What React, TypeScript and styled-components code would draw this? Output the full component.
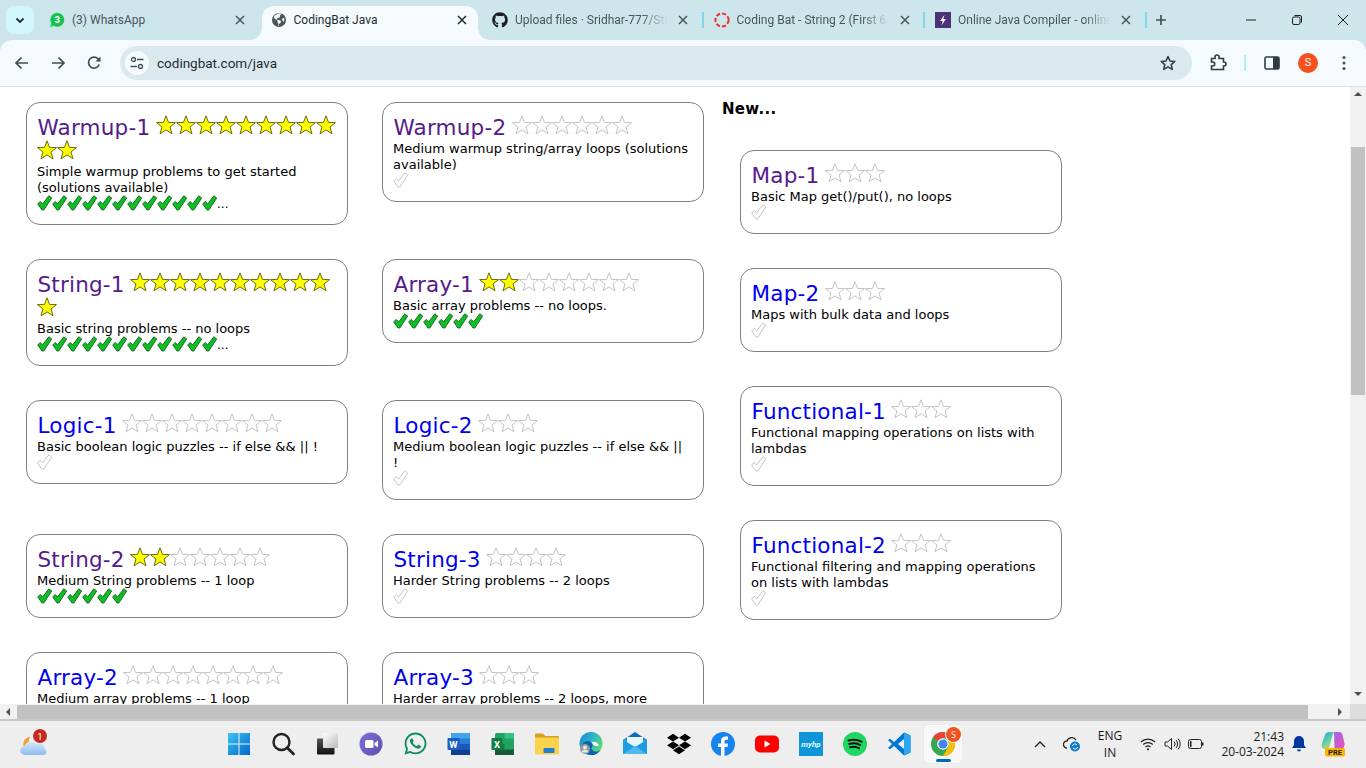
import React from "react";
import styled, { createGlobalStyle } from "styled-components";
import { FaWhatsapp, FaDropbox, FaGithub } from "react-icons/fa";

const Global = createGlobalStyle`
  html, body { margin: 0; padding: 0; height: 100%; overflow: hidden; background: #fff; }
  #root { height: 100%; }
  * { box-sizing: border-box; }
`;

const Screen = styled.div`
  width: 1366px; height: 768px; display: flex; flex-direction: column; overflow: hidden;
  font-family: Roboto, "Noto Sans", sans-serif;
`;

/* ---------- browser chrome ---------- */
const TabStrip = styled.div`
  height: 40px; flex: none; background: #cde6eb; display: flex; align-items: flex-start; padding-left: 6px;
`;
const TabListButton = styled.div`
  width: 28px; height: 28px; margin-top: 6px; margin-right: 6.5px; border-radius: 8px; background: #d3f5fc;
  display: flex; align-items: center; justify-content: center; flex: none;
`;
const Tab = styled.div<{ $active?: boolean; $sep?: boolean }>`
  position: relative; flex: none; height: 34px; margin-top: 6px; display: flex; align-items: center;
  padding-left: 8.5px; padding-bottom: 6px; width: ${p => (p.$active ? "216px" : "221.5px")};
  margin-right: ${p => (p.$active ? "5.5px" : "0")};
  padding-right: ${p => (p.$active ? "10.5px" : "16px")};
  background: ${p => (p.$active ? "#f5fafd" : "transparent")};
  border-radius: 12px 12px 0 0;
  ${p => p.$sep && `&::after { content: ""; position: absolute; left: 218px; top: 6px; width: 2px; height: 16px; background: #7fd6e6; }`}
  ${p => p.$active && `
    &::before { content: ""; position: absolute; left: -12px; bottom: 0; width: 12px; height: 12px;
      background: radial-gradient(circle at 0 0, transparent 11.5px, #f5fafd 12px); }
    &::after { content: ""; position: absolute; right: -12px; bottom: 0; width: 12px; height: 12px;
      background: radial-gradient(circle at 100% 0, transparent 11.5px, #f5fafd 12px); }
  `}
`;
const TabIcon = styled.span`
  width: 16px; height: 16px; flex: none; display: flex; align-items: center; justify-content: center; margin-right: 7px;
`;
const TabTitle = styled.span<{ $fade?: boolean; $active?: boolean }>`
  width: 152.5px; flex: none; overflow: hidden; white-space: nowrap; font-size: 12px; line-height: 16px;
  color: ${p => (p.$active ? "#1f2d32" : "#47565b")};
  ${p => p.$fade && `-webkit-mask-image: linear-gradient(to right, #000 82%, transparent 100%); mask-image: linear-gradient(to right, #000 82%, transparent 100%);`}
`;
const TabClose = styled.span`
  margin-left: auto; width: 12px; height: 12px; flex: none; display: flex;
`;
const NewTab = styled.div`
  width: 26px; height: 28px; margin-top: 6px; flex: none; display: flex; align-items: center; justify-content: center;
`;
const WindowControls = styled.div`
  margin-left: auto; display: flex; height: 40px;
`;
const WindowButton = styled.div`
  width: 46px; height: 40px; display: flex; align-items: center; justify-content: center;
`;
const Toolbar = styled.div`
  height: 47px; flex: none; background: #f5fafd; border-bottom: 1px solid #d6e4e9; display: flex; align-items: center;
  padding-left: 4px; padding-bottom: 1px; border-radius: 12px 12px 0 0; position: relative;
`;
const ToolbarBackdrop = styled.div`
  flex: none; background: #cde6eb;
`;
const ToolButton = styled.div`
  width: 36px; height: 36px; flex: none; display: flex; align-items: center; justify-content: center;
`;
const Omnibox = styled.div`
  width: 1072px; height: 34px; flex: none; margin: 0 8px; border-radius: 17px; background: #dae9ee;
  display: flex; align-items: center; padding: 0 16px 0 5px;
`;
const SiteBadge = styled.div`
  width: 24px; height: 24px; border-radius: 50%; background: #f5fafd; display: flex; align-items: center; justify-content: center; margin-right: 8px;
`;
const Url = styled.span`
  font-size: 13.5px; color: #1f2d32; flex: 1;
`;
const ToolSep = styled.div`
  width: 2px; height: 16px; margin: 0 8px; background: #aef0fb; flex: none;
`;
const Avatar = styled.div`
  width: 20px; height: 20px; border-radius: 50%; background: #f4511e; color: #fff; font-size: 11px;
  display: flex; align-items: center; justify-content: center;
`;

/* ---------- web page ---------- */
const Viewport = styled.div`
  flex: none; height: 617px; display: flex; overflow: hidden; background: #fff;
`;
const Page = styled.main`
  flex: 1; min-width: 0; overflow: hidden; padding: 15px 0 0 26px; display: flex; align-items: flex-start;
  font-family: "DejaVu Sans", Verdana, sans-serif; color: #000;
`;
const MainGrid = styled.div`
  display: grid; grid-template-columns: 322px 322px; gap: 34px; align-items: start; flex: none;
`;
const NewColumn = styled.section`
  margin-left: 18px; flex: none; display: flex; flex-direction: column;
`;
const NewHeading = styled.h2`
  margin: 0 0 34px; font-size: 15px; line-height: 14px; font-weight: 700; letter-spacing: 0.3px;
`;
const NewList = styled.div`
  margin-left: 18px; width: 322px; display: flex; flex-direction: column; gap: 34px;
`;
const Card = styled.article`
  border: 1px solid #808080; border-radius: 14px; padding: 12px 10px 13px; background: #fff;
`;
const Heading = styled.div<{ $wrapped?: boolean }>`
  line-height: 25px; font-size: 21.5px; letter-spacing: 0.2px;
  margin-bottom: ${p => (p.$wrapped ? "-2px" : "0")};
`;
const CardLink = styled.a<{ $visited?: boolean }>`
  color: ${p => (p.$visited ? "#551a8b" : "#0000ee")}; text-decoration: none; margin: 0 5.3px 0 0.5px;
`;
const StarSvg = styled.svg`
  width: 20px; height: 20px; vertical-align: top;
`;
const Desc = styled.div`
  font-size: 13px; line-height: 16px; white-space: pre-line; padding-top: 1px; margin-bottom: -1px;
`;
const Checks = styled.div`
  height: 16px; line-height: 16px; font-size: 13px; white-space: nowrap; display: flex; align-items: center;
`;
const CheckSvg = styled.svg`
  width: 15px; height: 16px; flex: none;
`;
const More = styled.span`
  position: relative; top: 1px; font-size: 12px;
`;

const VScroll = styled.div`
  width: 16px; flex: none; background: #f1f1f1; display: flex; flex-direction: column; align-items: center; padding-bottom: 2px;
`;
const VThumb = styled.div`
  width: 14px; height: 248px; margin: 44px 0 auto; background: #c1c1c1; flex: none;
`;
const ArrowBox = styled.div<{ $gap?: boolean }>`
  width: 16px; height: 16px; flex: none; display: flex; align-items: center; justify-content: center;
  margin-left: ${p => (p.$gap ? "24px" : "0")};
`;
const HScroll = styled.div`
  height: 17px; flex: none; background: #f1f1f1; display: flex; align-items: flex-start; border-bottom: 2px solid #c8c8c8;
`;
const HThumb = styled.div`
  width: 1291px; height: 14px; margin: 1px 0 0 1px; background: #c1c1c1; flex: none;
`;
const HCorner = styled.div`
  width: 16px; height: 15px; background: #dcdcdc; margin-left: auto; flex: none;
`;

/* ---------- taskbar ---------- */
const Taskbar = styled.footer`
  flex: 1; background: #eeeeee; display: flex; align-items: center; padding-bottom: 2px; font-family: "Open Sans", "Noto Sans", sans-serif;
`;
const Weather = styled.div`
  width: 30px; height: 30px; margin-left: 20px; flex: none;
`;
const Dock = styled.div`
  display: flex; margin-left: 167px; flex: none;
`;
const DockItem = styled.div<{ $active?: boolean }>`
  position: relative; width: 44px; height: 40px; display: flex; align-items: center; justify-content: center;
  ${p => p.$active && `&::before { content: ""; position: absolute; left: 3px; right: 3px; top: 1px; bottom: 1px; background: #f8f8f8; border-radius: 4px; box-shadow: 0 0 1px #ccc; }
   &::after { content: ""; position: absolute; left: 15px; bottom: 2px; width: 15px; height: 3px; border-radius: 2px; background: #0067c0; }`}
  & > * { position: relative; z-index: 1; }
`;
const Tray = styled.div`
  margin-left: auto; display: flex; align-items: center; height: 100%; color: #1a1a1a;
`;
const TrayIcon = styled.div<{ $w: number }>`
  width: ${p => p.$w}px; display: flex; align-items: center; justify-content: center; flex: none;
  & > svg { flex: none; }
`;
const Lang = styled.div`
  width: 36px; margin-right: 4px; font-size: 12px; line-height: 17px; text-align: center; flex: none; white-space: nowrap;
`;
const Clock = styled.div`
  width: 72px; font-size: 12px; line-height: 15px; text-align: right; flex: none; white-space: nowrap;
`;
const ChromeS = styled.span`
  position: absolute !important; right: 4px; top: 3px; width: 15px; height: 15px; border-radius: 50%; background: #f4511e; color: #fff;
  font-size: 9px; display: flex; align-items: center; justify-content: center; box-shadow: 0 0 0 1px #f8f8f8;
`;

/* ---------- drawn icons ---------- */
const Star = ({ on }: { on?: boolean }) => (
  <StarSvg viewBox="0 0 20 20">
    <polygon
      points="10,0.8 12.5,7.4 19.5,7.6 14,12 16,18.8 10,14.9 4,18.8 6,12 0.5,7.6 7.5,7.4"
      fill={on ? "#ffff00" : "#fff"}
      stroke={on ? "#6b6b10" : "#c4c4c4"}
      strokeWidth="1"
    />
  </StarSvg>
);
const Check = ({ on }: { on?: boolean }) => (
  <CheckSvg viewBox="0 0 15 16">
    <polygon
      points="0.7,9 3.2,6.4 5.6,9 11.8,0.8 14.7,3 6.8,15 5,15"
      fill={on ? "#0cc024" : "#fff"}
      stroke={on ? "#1f6b2a" : "#c4c4c4"}
      strokeWidth="1"
    />
  </CheckSvg>
);
const CloseX = ({ c = "#47565b" }: { c?: string }) => (
  <svg width="12" height="12" viewBox="0 0 12 12"><path d="M2 2l8 8M10 2l-8 8" stroke={c} strokeWidth="1.5" /></svg>
);

type CardData = { t: string; v?: boolean; on?: number; off?: number; d: string; c?: number; more?: boolean };
const left: CardData[] = [
  { t: "Warmup-1", v: true, on: 11, d: "Simple warmup problems to get started (solutions available)", c: 12, more: true },
  { t: "Warmup-2", v: true, off: 6, d: "Medium warmup string/array loops (solutions available)" },
  { t: "String-1", v: true, on: 11, d: "Basic string problems -- no loops", c: 12, more: true },
  { t: "Array-1", v: true, on: 2, off: 6, d: "Basic array problems -- no loops.", c: 6 },
  { t: "Logic-1", off: 8, d: "Basic boolean logic puzzles -- if else && || !" },
  { t: "Logic-2", off: 3, d: "Medium boolean logic puzzles -- if else && ||\n!" },
  { t: "String-2", v: true, on: 2, off: 5, d: "Medium String problems -- 1 loop", c: 6 },
  { t: "String-3", off: 4, d: "Harder String problems -- 2 loops" },
  { t: "Array-2", off: 8, d: "Medium array problems -- 1 loop" },
  { t: "Array-3", off: 3, d: "Harder array problems -- 2 loops, more" },
];
const right: CardData[] = [
  { t: "Map-1", v: true, off: 3, d: "Basic Map get()/put(), no loops" },
  { t: "Map-2", off: 3, d: "Maps with bulk data and loops" },
  { t: "Functional-1", off: 3, d: "Functional mapping operations on lists with lambdas" },
  { t: "Functional-2", off: 3, d: "Functional filtering and mapping operations on lists with lambdas" },
];

const ProblemCard = ({ data }: { data: CardData }) => (
  <Card>
    <Heading $wrapped={(data.on ?? 0) + (data.off ?? 0) > 10}>
      <CardLink href="#" $visited={data.v}>{data.t}</CardLink>
      {Array.from({ length: data.on ?? 0 }, (_, i) => <Star key={"a" + i} on />)}
      {Array.from({ length: data.off ?? 0 }, (_, i) => <Star key={"b" + i} />)}
    </Heading>
    <Desc>{data.d}</Desc>
    <Checks>
      {data.c
        ? Array.from({ length: data.c }, (_, i) => <Check key={i} on />)
        : <Check />}
      {data.more && <More>...</More>}
    </Checks>
  </Card>
);

const WhatsFav = () => (
  <svg width="16" height="16" viewBox="0 0 16 16">
    <path d="M1 15l1-4a7 7 0 1 1 3 3z" fill="#25d366" />
    <circle cx="8.3" cy="7.8" r="6.6" fill="#19c153" />
    <text x="8.3" y="11" fontSize="9.5" fontWeight="700" fill="#fff" textAnchor="middle" fontFamily="Roboto, sans-serif">3</text>
  </svg>
);
const GlobeFav = () => (
  <svg width="16" height="16" viewBox="0 0 16 16">
    <circle cx="8" cy="8" r="7" fill="#4a555a" />
    <path d="M7 1.5C5 3 3 3 3 5s2 2 3 3 0 2 1 3 0 3 1 3.5V12c1-.5 2-1.5 2-2.5S8.5 8 7 8 5.5 6.5 7 6s2-.5 2-2 1-1.5 2-2C9.5 1 8 1 7 1.5z" fill="#f5fafd" />
    <path d="M13 6c-1 0-2 .5-2 1.5s1 1 1.5 2.5c.8-1 1-3 .5-4z" fill="#f5fafd" />
  </svg>
);
const BatFav = () => (
  <svg width="16" height="16" viewBox="0 0 16 16">
    <circle cx="8" cy="8" r="6.6" fill="none" stroke="#e8322b" strokeWidth="2" strokeDasharray="4.2 2" />
  </svg>
);
const BoltFav = () => (
  <svg width="16" height="16" viewBox="0 0 16 16">
    <rect width="16" height="16" fill="#4b3279" />
    <path d="M9.5 2.8L5 9h2.7L6.5 13.2 11 7H8.3z" fill="#fff" />
  </svg>
);

const WinLogo = () => (
  <svg width="24" height="24" viewBox="0 0 24 24">
    <defs><linearGradient id="wl" x1="0" y1="0" x2="1" y2="1"><stop offset="0" stopColor="#3cc4f4" /><stop offset="1" stopColor="#0068c8" /></linearGradient></defs>
    <path d="M1 1h10.5v10.5H1zM12.5 1H23v10.5H12.5zM1 12.5h10.5V23H1zM12.5 12.5H23V23H12.5z" fill="url(#wl)" />
  </svg>
);
const SearchIcon = () => (
  <svg width="26" height="26" viewBox="0 0 26 26"><circle cx="11.5" cy="11" r="8" fill="none" stroke="#222" strokeWidth="2.4" /><path d="M17.5 17l6 6" stroke="#222" strokeWidth="2.8" strokeLinecap="round" /></svg>
);
const TaskView = () => (
  <svg width="24" height="24" viewBox="0 0 24 24">
    <defs><linearGradient id="tv" x1="0" y1="0" x2="1" y2="1"><stop offset="0" stopColor="#fff" /><stop offset="1" stopColor="#bbb" /></linearGradient>
    <linearGradient id="tv2" x1="0" y1="0" x2="0" y2="1"><stop offset="0" stopColor="#555" /><stop offset="1" stopColor="#111" /></linearGradient></defs>
    <rect x="2" y="6.5" width="17.5" height="16" rx="1" fill="url(#tv2)" />
    <rect x="8" y="1" width="15" height="15" rx="1" fill="url(#tv)" />
  </svg>
);
const MeetIcon = () => (
  <svg width="24" height="24" viewBox="0 0 24 24">
    <defs><linearGradient id="mt" x1="0" y1="0" x2="1" y2="1"><stop offset="0" stopColor="#7d6fd8" /><stop offset="1" stopColor="#5a4fb0" /></linearGradient></defs>
    <circle cx="12" cy="12" r="11.5" fill="url(#mt)" />
    <rect x="6" y="8" width="8.5" height="8" rx="1.5" fill="#fff" />
    <path d="M15.5 11l3.5-2.5v7L15.5 13z" fill="#fff" />
  </svg>
);
const WordIcon = () => (
  <svg width="24" height="24" viewBox="0 0 24 24">
    <rect x="4" y="1" width="19" height="22" rx="1.5" fill="#2b7cd3" />
    <rect x="4" y="1" width="19" height="5.5" fill="#41a5ee" />
    <rect x="4" y="12" width="19" height="5.5" fill="#185abd" />
    <rect x="4" y="17.5" width="19" height="5.5" fill="#103f91" />
    <rect x="0.5" y="6" width="12" height="12" rx="1" fill="#1a5fc0" />
    <text x="6.5" y="15.5" fontSize="9.5" fontWeight="700" fill="#fff" textAnchor="middle" fontFamily="Roboto, sans-serif">W</text>
  </svg>
);
const ExcelIcon = () => (
  <svg width="24" height="24" viewBox="0 0 24 24">
    <rect x="4" y="1" width="19" height="22" rx="1.5" fill="#21a366" />
    <rect x="13.5" y="1" width="9.5" height="5.5" fill="#33c481" />
    <rect x="4" y="12" width="9.5" height="5.5" fill="#107c41" />
    <rect x="4" y="17.5" width="19" height="5.5" fill="#185c37" />
    <rect x="0.5" y="6" width="11" height="12" rx="1" fill="#107c41" />
    <text x="6" y="15.5" fontSize="9.5" fontWeight="700" fill="#fff" textAnchor="middle" fontFamily="Roboto, sans-serif">X</text>
  </svg>
);
const FolderIcon = () => (
  <svg width="24" height="24" viewBox="0 0 24 24">
    <path d="M0 2.5a1 1 0 0 1 1-1h7l2.5 2.5H23a1 1 0 0 1 1 1V8H0z" fill="#d9a020" />
    <path d="M0 5.5h24v16a1 1 0 0 1-1 1H1a1 1 0 0 1-1-1z" fill="#fcd34d" />
    <rect x="8.5" y="16" width="11" height="5" rx="1" fill="#1f7fd0" />
  </svg>
);
const EdgeIcon = () => (
  <svg width="24" height="24" viewBox="0 0 24 24">
    <defs><linearGradient id="eg" x1="0" y1="0" x2="1" y2="0.6"><stop offset="0" stopColor="#1685d0" /><stop offset=".55" stopColor="#2fb6c8" /><stop offset="1" stopColor="#62dc6c" /></linearGradient></defs>
    <circle cx="12" cy="11.5" r="11.5" fill="url(#eg)" />
    <path d="M2 16c0-5 6-9 10-6 2 1.5 2 3.5 1 5-1.5 2 1 5 5 4.5 1.5-.2 3-1 4-2.5-2 4-6 6.5-10 6-5-.3-9-3-10-7z" fill="#0b63b0" />
    <path d="M12 10c3-1 7 0 8 3.5-2 1-4.5.5-5.5-.5-.8-1-1.5-2.5-2.5-3z" fill="#eefaff" />
    <circle cx="6" cy="17" r="5" fill="#9a9a9a" />
    <circle cx="6" cy="15.5" r="1.9" fill="#e8e8e8" />
    <path d="M2.7 20.5a3.3 2.8 0 0 1 6.6 0z" fill="#e8e8e8" />
  </svg>
);
const MailIcon = () => (
  <svg width="24" height="24" viewBox="0 0 24 24">
    <path d="M0 8L12 0l12 8z" fill="#0f6cbd" />
    <rect y="7.5" width="24" height="14.5" fill="#28a8ea" />
    <path d="M4 5h16v5l-8 5-8-5z" fill="#eaf6ff" />
    <path d="M0 8l12 8 12-8v14H0z" fill="#1b9de2" />
    <path d="M0 22l12-8 12 8z" fill="#50b8f0" />
  </svg>
);
const FacebookIcon = () => (
  <svg width="24" height="24" viewBox="0 0 24 24">
    <circle cx="12" cy="12" r="12" fill="#1684ee" />
    <path d="M13.5 24v-9h3l.5-3.5h-3.5V9.5c0-1 .5-1.8 1.9-1.8H17V4.6c-.5-.1-1.5-.2-2.6-.2-2.7 0-4.4 1.6-4.4 4.5v2.6H7V15h3v9z" fill="#fff" />
  </svg>
);
const SpotifyIcon = () => (
  <svg width="24" height="24" viewBox="0 0 24 24">
    <circle cx="12" cy="12" r="12" fill="#1ed760" />
    <path d="M5.5 8.5c4-1.2 9-1 13 1.2M6.2 12c3.5-1 8-.8 11 1M7 15.3c3-.8 6.5-.6 9 .9" fill="none" stroke="#111" strokeWidth="2" strokeLinecap="round" />
  </svg>
);
const YouTubeIcon = () => (
  <svg width="24" height="24" viewBox="0 0 24 24">
    <rect y="3.5" width="24" height="17" rx="5" fill="#f00" />
    <path d="M9.5 8.5v7l6-3.5z" fill="#fff" />
  </svg>
);
const MyHpIcon = () => (
  <svg width="24" height="24" viewBox="0 0 24 24">
    <rect width="24" height="24" fill="#0e96d8" />
    <text x="12" y="15" fontSize="8" fontStyle="italic" fontWeight="700" fill="#dff" textAnchor="middle" fontFamily="Roboto, sans-serif">myhp</text>
  </svg>
);
const VsCodeIcon = () => (
  <svg width="24" height="24" viewBox="0 0 24 24">
    <path d="M17 .5L23.5 3.5v17L17 23.5 7 14l-4 3.2-2-1.2L5 12 1 8l2-1.2L7 10z" fill="#0078d0" />
    <path d="M17 .5L23.5 3.5v17L17 23.5z" fill="#2aa6f0" />
    <path d="M17 7l-6 5 6 5z" fill="#eee" />
  </svg>
);
const ChromeIcon = () => (
  <svg width="24" height="24" viewBox="0 0 24 24" >
    <circle cx="12" cy="12" r="12" fill="#34a853" />
    <path d="M12 0a12 12 0 0 1 10.4 6H12a6 6 0 0 0-5.4 3.3L2.2 5A12 12 0 0 1 12 0z" fill="#ea4335" />
    <path d="M22.4 6A12 12 0 0 1 12 24l5.2-9A6 6 0 0 0 17 8.5z" fill="#fbbc04" />
    <circle cx="12" cy="12" r="5.8" fill="#fff" />
    <circle cx="12" cy="12" r="4.6" fill="#4285f4" />
  </svg>
);
const WeatherIcon = () => (
  <svg width="30" height="30" viewBox="0 0 30 30">
    <defs><linearGradient id="cl" x1="0" y1="0" x2="0" y2="1"><stop offset="0" stopColor="#d7e9fb" /><stop offset="1" stopColor="#8fbcee" /></linearGradient></defs>
    <path d="M10 8a7 7 0 0 0 3 10H4a7 7 0 0 1 6-10z" fill="#f0a030" />
    <path d="M5 26a4.5 4.5 0 0 1-.5-9 7 7 0 0 1 12-2 5.5 5.5 0 0 1 8 4.5A3.5 3.5 0 0 1 24 26z" fill="url(#cl)" />
    <circle cx="20" cy="7" r="7" fill="#c42b1c" />
    <text x="20" y="10.5" fontSize="9.5" fill="#fff" textAnchor="middle" fontFamily="Roboto, sans-serif">1</text>
  </svg>
);
const CopilotIcon = () => (
  <svg width="24" height="26" viewBox="0 0 24 26">
    <defs>
      <linearGradient id="co1" x1="0" y1="0" x2="0.6" y2="1"><stop offset="0" stopColor="#1fa8ee" /><stop offset=".6" stopColor="#6cd0a0" /><stop offset="1" stopColor="#c8dc50" /></linearGradient>
      <linearGradient id="co2" x1="0" y1="0" x2="1" y2="1"><stop offset="0" stopColor="#9a6ae8" /><stop offset="1" stopColor="#f04fb0" /></linearGradient>
    </defs>
    <path d="M13 1h5c2 0 3 1 3.5 3l2 8c.5 3-1 6-4 6h-6z" fill="url(#co2)" />
    <path d="M8 1h7c-2 0-3 1-3.5 3L9 14c-.5 2-1.5 4-3.5 4H4c-3 0-4-3-3-6l3-8c.6-2 2-3 4-3z" fill="url(#co1)" />
    <rect x="4" y="17" width="20" height="8.5" rx="2" fill="#f9b500" />
    <text x="14" y="24" fontSize="7.5" fontWeight="700" fill="#222" textAnchor="middle" fontFamily="Roboto, sans-serif">PRE</text>
  </svg>
);

const dock: { key: string; node: React.ReactNode; active?: boolean }[] = [
  { key: "win", node: <WinLogo /> },
  { key: "search", node: <SearchIcon /> },
  { key: "tasks", node: <TaskView /> },
  { key: "meet", node: <MeetIcon /> },
  { key: "wa", node: <FaWhatsapp size={25} color="#128c5e" /> },
  { key: "word", node: <WordIcon /> },
  { key: "excel", node: <ExcelIcon /> },
  { key: "folder", node: <FolderIcon /> },
  { key: "edge", node: <EdgeIcon /> },
  { key: "mail", node: <MailIcon /> },
  { key: "dropbox", node: <FaDropbox size={24} color="#000" /> },
  { key: "fb", node: <FacebookIcon /> },
  { key: "yt", node: <YouTubeIcon /> },
  { key: "hp", node: <MyHpIcon /> },
  { key: "spotify", node: <SpotifyIcon /> },
  { key: "vs", node: <VsCodeIcon /> },
  { key: "chrome", active: true, node: <><ChromeIcon /><ChromeS>S</ChromeS></> },
];

const Tri = ({ d }: { d: "u" | "d" | "l" | "r" }) => {
  const pts = { u: "1,6 9,6 5,2", d: "1,3 9,3 5,7", l: "7,1 7,9 3,5", r: "3,1 3,9 7,5" }[d];
  return <svg width="10" height="10" viewBox="0 0 10 10"><polygon points={pts} fill="#505050" /></svg>;
};

export default function App() {
  return (
    <Screen>
      <Global />
      <TabStrip>
        <TabListButton>
          <svg width="12" height="12" viewBox="0 0 12 12"><path d="M2.5 4.5L6 8l3.5-3.5" fill="none" stroke="#1f2d32" strokeWidth="1.8" /></svg>
        </TabListButton>
        <Tab>
          <TabIcon><WhatsFav /></TabIcon>
          <TabTitle>(3) WhatsApp</TabTitle>
          <TabClose><CloseX /></TabClose>
        </Tab>
        <Tab $active>
          <TabIcon><GlobeFav /></TabIcon>
          <TabTitle $active>CodingBat Java</TabTitle>
          <TabClose><CloseX c="#1f2d32" /></TabClose>
        </Tab>
        <Tab $sep>
          <TabIcon><FaGithub size={16} color="#1b1f23" /></TabIcon>
          <TabTitle $fade>Upload files · Sridhar-777/String-2</TabTitle>
          <TabClose><CloseX /></TabClose>
        </Tab>
        <Tab $sep>
          <TabIcon><BatFav /></TabIcon>
          <TabTitle $fade>Coding Bat - String 2 (First 6 problems)</TabTitle>
          <TabClose><CloseX /></TabClose>
        </Tab>
        <Tab $sep>
          <TabIcon><BoltFav /></TabIcon>
          <TabTitle $fade>Online Java Compiler - online editor</TabTitle>
          <TabClose><CloseX /></TabClose>
        </Tab>
        <NewTab>
          <svg width="12" height="12" viewBox="0 0 12 12"><path d="M6 1v10M1 6h10" stroke="#3f4f55" strokeWidth="1.7" /></svg>
        </NewTab>
        <WindowControls>
          <WindowButton><svg width="12" height="12" viewBox="0 0 12 12"><path d="M1 6h10" stroke="#1c1c1c" /></svg></WindowButton>
          <WindowButton><svg width="12" height="12" viewBox="0 0 12 12"><rect x="1.5" y="3" width="7.5" height="7.5" rx="1.5" fill="none" stroke="#1c1c1c" /><path d="M3.5 1.5H9a1.5 1.5 0 0 1 1.5 1.5v5.5" fill="none" stroke="#1c1c1c" /></svg></WindowButton>
          <WindowButton><svg width="12" height="12" viewBox="0 0 12 12"><path d="M1 1l10 10M11 1L1 11" stroke="#1c1c1c" /></svg></WindowButton>
        </WindowControls>
      </TabStrip>
      <ToolbarBackdrop>
      <Toolbar>
        <ToolButton><svg width="16" height="16" viewBox="0 0 16 16"><path d="M14 8H2.5M7.5 2.5L2 8l5.500 5.500" fill="none" stroke="#3f4f55" strokeWidth="1.7" /></svg></ToolButton>
        <ToolButton><svg width="16" height="16" viewBox="0 0 16 16"><path d="M2 8h11.5M8.500 2.500L14 8l-5.500 5.500" fill="none" stroke="#3f4f55" strokeWidth="1.7" /></svg></ToolButton>
        <ToolButton><svg width="16" height="16" viewBox="0 0 16 16"><path d="M13.2 9.5A5.5 5.5 0 1 1 12 3.8L14 6" fill="none" stroke="#3f4f55" strokeWidth="1.7" /><path d="M14.5 1.5v5h-5z" fill="#3f4f55" /></svg></ToolButton>
        <Omnibox>
          <SiteBadge>
            <svg width="14" height="14" viewBox="0 0 14 14"><circle cx="3.5" cy="3.5" r="2" fill="none" stroke="#3f4f55" strokeWidth="1.3" /><path d="M7 3.5h6.5M.5 10.5H7" stroke="#3f4f55" strokeWidth="1.5" /><circle cx="10.5" cy="10.5" r="2" fill="none" stroke="#3f4f55" strokeWidth="1.3" /></svg>
          </SiteBadge>
          <Url>codingbat.com/java</Url>
          <svg width="16" height="16" viewBox="0 0 16 16"><polygon points="8,1.5 10,6 14.8,6.4 11.2,9.6 12.3,14.4 8,11.9 3.7,14.4 4.8,9.6 1.2,6.4 6,6" fill="none" stroke="#2e3d42" strokeWidth="1.5" strokeLinejoin="round" /></svg>
        </Omnibox>
        <ToolButton>
          <svg width="18" height="18" viewBox="0 0 18 18"><path d="M2 5h3.5V3.5a2 2 0 0 1 4 0V5H14v3.5h.5a2 2 0 0 1 0 4H14V16H2v-3.5h1.2a2 2 0 0 0 0-4H2z" fill="none" stroke="#2e3d42" strokeWidth="1.6" transform="translate(0.5 -0.5)" /></svg>
        </ToolButton>
        <ToolSep />
        <ToolButton>
          <svg width="16" height="16" viewBox="0 0 16 16"><rect x="1" y="2" width="14" height="12" rx="1.5" fill="none" stroke="#2e3d42" strokeWidth="1.6" /><rect x="9" y="2" width="6" height="12" fill="#2e3d42" /></svg>
        </ToolButton>
        <ToolButton><Avatar>S</Avatar></ToolButton>
        <ToolButton>
          <svg width="16" height="16" viewBox="0 0 16 16"><circle cx="8" cy="2.5" r="1.5" fill="#3f4f55" /><circle cx="8" cy="8" r="1.5" fill="#3f4f55" /><circle cx="8" cy="13.5" r="1.5" fill="#3f4f55" /></svg>
        </ToolButton>
      </Toolbar>
      </ToolbarBackdrop>
      <Viewport>
        <Page>
          <MainGrid>
            {left.map(c => <ProblemCard key={c.t} data={c} />)}
          </MainGrid>
          <NewColumn>
            <NewHeading>New...</NewHeading>
            <NewList>
              {right.map(c => <ProblemCard key={c.t} data={c} />)}
            </NewList>
          </NewColumn>
        </Page>
        <VScroll>
          <ArrowBox><Tri d="u" /></ArrowBox>
          <VThumb />
          <ArrowBox><Tri d="d" /></ArrowBox>
        </VScroll>
      </Viewport>
      <HScroll>
        <ArrowBox><Tri d="l" /></ArrowBox>
        <HThumb />
        <ArrowBox $gap><Tri d="r" /></ArrowBox>
        <HCorner />
      </HScroll>
      <Taskbar>
        <Weather><WeatherIcon /></Weather>
        <Dock>
          {dock.map(d => <DockItem key={d.key} $active={d.active}>{d.node}</DockItem>)}
        </Dock>
        <Tray>
          <TrayIcon $w={24}>
            <svg width="14" height="10" viewBox="0 0 14 10"><path d="M2 8l5-5 5 5" fill="none" stroke="#222" strokeWidth="1.4" /></svg>
          </TrayIcon>
          <TrayIcon $w={40}>
            <svg width="18" height="16" viewBox="0 0 18 16"><path d="M4 12a3.5 3.5 0 0 1 0-7 5 5 0 0 1 9-1" fill="none" stroke="#222" strokeWidth="1.3" /><circle cx="12" cy="10.5" r="5" fill="#0a7bd0" /><path d="M9.5 10a2.5 2.5 0 0 1 4.5-1M14.5 11a2.5 2.5 0 0 1-4.5 1" fill="none" stroke="#fff" /></svg>
          </TrayIcon>
          <Lang>ENG<br />IN</Lang>
          <TrayIcon $w={32}>
            <svg width="16" height="14" viewBox="0 0 16 14"><path d="M1 5a10 10 0 0 1 14 0M3.2 7.5a7 7 0 0 1 9.6 0M5.5 10a3.7 3.7 0 0 1 5 0" fill="none" stroke="#222" strokeWidth="1.1" /><circle cx="8" cy="12.3" r="1.1" fill="#222" /></svg>
          </TrayIcon>
          <TrayIcon $w={16}>
            <svg width="17" height="14" viewBox="0 0 17 14"><path d="M1 5v4h2.5L7.5 12.5V1.5L3.5 5z" fill="none" stroke="#222" /><path d="M10 4.5a3.5 3.5 0 0 1 0 5M12 3a6 6 0 0 1 0 8M14 1.5a8 8 0 0 1 0 11" fill="none" stroke="#222" /></svg>
          </TrayIcon>
          <TrayIcon $w={32}>
            <svg width="16" height="12" viewBox="0 0 16 12"><rect x="0.5" y="1.5" width="13" height="9" rx="2" fill="none" stroke="#222" /><rect x="2" y="3" width="1.5" height="6" fill="#222" /><rect x="14" y="4.5" width="1.5" height="3" fill="#222" /></svg>
          </TrayIcon>
          <Clock>21:43<br />20-03-2024</Clock>
          <TrayIcon $w={30}>
            <svg width="16" height="18" viewBox="0 0 16 18"><path d="M8 1a5 5 0 0 1 5 5v4l2 3H1l2-3V6a5 5 0 0 1 5-5z" fill="#00379e" /><path d="M6 14.5a2 2 0 0 0 4 0z" fill="#00379e" /></svg>
          </TrayIcon>
          <TrayIcon $w={38}><CopilotIcon /></TrayIcon>
          <TrayIcon $w={14} />
        </Tray>
      </Taskbar>
    </Screen>
  );
}
